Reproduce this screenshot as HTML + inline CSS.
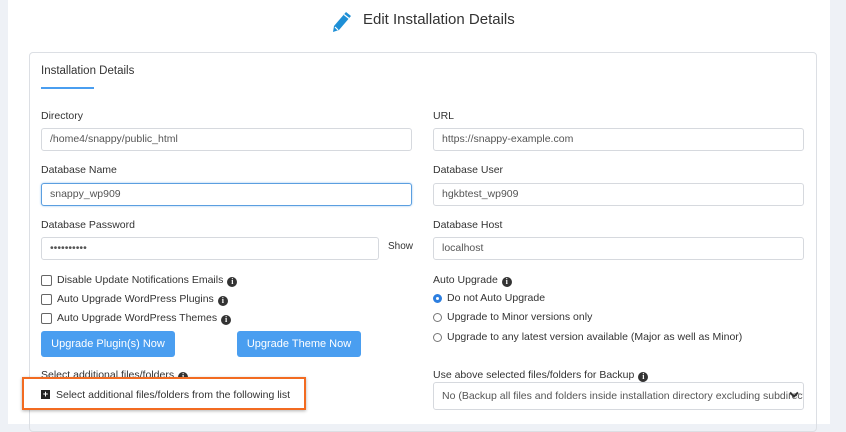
<!DOCTYPE html>
<html><head><style>
*{box-sizing:border-box;margin:0;padding:0}
body{width:846px;height:424px;background:#eef1f6;font-family:"Liberation Sans",sans-serif;color:#333;position:relative;overflow:hidden;font-size:10.5px}
.a{position:absolute}
.main{left:8px;top:0;width:822px;height:424px;background:#fff}
.card{left:29px;top:52px;width:788px;height:380px;border:1px solid #dcdfe4;border-radius:4px}
.lbl{font-size:10.5px;color:#333}
.inp{height:23px;border:1px solid #d6d9de;border-radius:3px;font-size:10.5px;color:#555;padding:0 8px;line-height:21px;background:#fff}
.cb{width:11px;height:11px;border:1px solid #666;border-radius:2px;background:#fff}
.rd{width:9px;height:9px;border:1px solid #777;border-radius:50%}
.btn{height:26px;background:#4a9ef0;color:#fff;border-radius:3px;font-size:11px;text-align:center;line-height:26px}
.i{display:inline-block;width:10px;height:10px;border-radius:50%;background:#333;color:#fff;font-size:8px;font-weight:bold;text-align:center;line-height:10px;vertical-align:-1px;margin-left:4px;font-family:"Liberation Serif",serif}
</style></head><body>
<div class="a main"></div>
<svg class="a" style="left:332px;top:11px" width="20" height="22" viewBox="0 0 20 22"><path d="M14 1 L19 5 L7 19 L1 21 L2 15 Z" fill="#1e8fd6"/><path d="M3 16 L6 19" stroke="#fff" stroke-width="1.2"/><path d="M12 3.5 L17 7.5" stroke="#fff" stroke-width="1.2"/></svg>
<div class="a" style="left:363px;top:11px;font-size:15px;color:#333">Edit Installation Details</div>
<div class="a card"></div>
<div class="a" style="left:41px;top:65px;font-size:11.5px">Installation Details</div>
<div class="a" style="left:41px;top:87px;width:53px;height:2px;background:#4a9ef0"></div>

<div class="a lbl" style="left:41px;top:110px">Directory</div>
<div class="a inp" style="left:41px;top:128px;width:371px">/home4/snappy/public_html</div>
<div class="a lbl" style="left:433px;top:110px">URL</div>
<div class="a inp" style="left:433px;top:128px;width:371px">https://snappy-example.com</div>

<div class="a lbl" style="left:41px;top:164px">Database Name</div>
<div class="a inp" style="left:41px;top:183px;width:371px;border-color:#5b9fe0;box-shadow:0 0 2px #9cc6ef">snappy_wp909</div>
<div class="a lbl" style="left:433px;top:164px">Database User</div>
<div class="a inp" style="left:433px;top:183px;width:371px">hgkbtest_wp909</div>

<div class="a lbl" style="left:41px;top:219px">Database Password</div>
<div class="a inp" style="left:41px;top:237px;width:338px">••••••••••</div>
<div class="a lbl" style="left:388px;top:241px;font-size:10px">Show</div>
<div class="a lbl" style="left:433px;top:219px">Database Host</div>
<div class="a inp" style="left:433px;top:237px;width:371px">localhost</div>

<div class="a cb" style="left:41px;top:275px"></div><div class="a lbl" style="left:57px;top:274px">Disable Update Notifications Emails<span class="i">i</span></div>
<div class="a cb" style="left:41px;top:294px"></div><div class="a lbl" style="left:57px;top:293px">Auto Upgrade WordPress Plugins<span class="i">i</span></div>
<div class="a cb" style="left:41px;top:313px"></div><div class="a lbl" style="left:57px;top:312px">Auto Upgrade WordPress Themes<span class="i">i</span></div>
<div class="a btn" style="left:41px;top:331px;width:134px">Upgrade Plugin(s) Now</div>
<div class="a btn" style="left:237px;top:331px;width:124px">Upgrade Theme Now</div>

<div class="a lbl" style="left:433px;top:274px">Auto Upgrade<span class="i">i</span></div>
<div class="a rd" style="left:433px;top:294px;border:3px solid #2d7fe0"></div><div class="a lbl" style="left:447px;top:292px">Do not Auto Upgrade</div>
<div class="a rd" style="left:433px;top:313px"></div><div class="a lbl" style="left:447px;top:311px">Upgrade to Minor versions only</div>
<div class="a rd" style="left:433px;top:333px"></div><div class="a lbl" style="left:447px;top:331px">Upgrade to any latest version available (Major as well as Minor)</div>

<div class="a lbl" style="left:41px;top:369px">Select additional files/folders<span class="i">i</span></div>
<div class="a" style="left:22px;top:377px;width:284px;height:33px;border:2px solid #f26b21;background:#fff;box-shadow:0 1px 3px rgba(0,0,0,.3)"></div>
<div class="a" style="left:41px;top:390px;width:9px;height:9px;background:#222;color:#fff;font-size:9px;line-height:9px;text-align:center;font-weight:bold">+</div>
<div class="a lbl" style="left:56px;top:389px">Select additional files/folders from the following list</div>

<div class="a lbl" style="left:433px;top:369px">Use above selected files/folders for Backup<span class="i">i</span></div>
<div class="a inp" style="left:433px;top:382px;width:371px;height:28px;line-height:26px;overflow:hidden;white-space:nowrap;padding-right:22px">No (Backup all files and folders inside installation directory excluding subdirectories)</div>
<svg class="a" style="left:789px;top:391px" width="10" height="8" viewBox="0 0 10 8"><path d="M1 1.5 L5 5.5 L9 1.5" stroke="#333" stroke-width="2" fill="none"/></svg>
</body></html>
